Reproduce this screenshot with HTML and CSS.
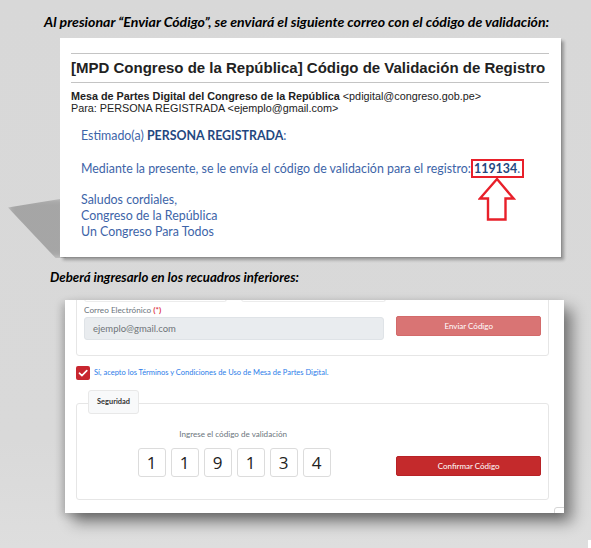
FILE: index.html
```html
<!DOCTYPE html>
<html lang="es">
<head>
<meta charset="utf-8">
<title>Código de validación</title>
<link rel="stylesheet" href="styles.css">
</head>
<body>
<div class="page">
  <p class="caption caption-1">Al presionar “Enviar Código”, se enviará el siguiente correo con el código de validación:</p>

  <div class="email-card">
    <div class="email-head">
      <h1 class="email-title">[MPD Congreso de la República] Código de Validación de Registro</h1>
    </div>
    <div class="email-meta">
      <div><b>Mesa de Partes Digital del Congreso de la República</b> &lt;pdigital@congreso.gob.pe&gt;</div>
      <div>Para: PERSONA REGISTRADA &lt;ejemplo@gmail.com&gt;</div>
    </div>
    <div class="email-body">
      <p class="p-greet">Estimado(a) <b class="dark">PERSONA REGISTRADA</b>:</p>
      <p class="p-main">Mediante la presente, se le envía el código de validación para el registro: <span class="code-box"><b class="dark">119134</b>.</span></p>
      <p class="p-sign">Saludos cordiales,<br>Congreso de la República<br>Un Congreso Para Todos</p>
    </div>
    <svg class="arrow" width="38" height="45" viewBox="0 0 38 45" aria-hidden="true">
      <path d="M19 2 L35.5 21.5 L27.5 21.5 L27.5 42.5 L10 42.5 L10 21.5 L2 21.5 Z" fill="none" stroke="#e8202a" stroke-width="2.4" stroke-linejoin="miter"/>
    </svg>
  </div>

  <p class="caption caption-2">Deberá ingresarlo en los recuadros inferiores:</p>

  <div class="form-card">
    <div class="fieldset fs-contact">
      <div class="prev-row"><span class="prev-a"></span><span class="prev-b"></span></div>
      <div class="field-label">Correo Electrónico <span class="req">(*)</span></div>
      <div class="row">
        <div class="input">ejemplo@gmail.com</div>
        <div class="btn btn-light">Enviar Código</div>
      </div>
    </div>

    <div class="check-row">
      <span class="checkbox">
        <svg width="14" height="14" viewBox="0 0 14 14" aria-hidden="true"><path d="M3.4 7.2 L5.9 9.6 L10.8 4.6" fill="none" stroke="#fff" stroke-width="1.6" stroke-linecap="round" stroke-linejoin="round"/></svg>
      </span>
      <span class="check-text">Sí, acepto los Términos y Condiciones de Uso de Mesa de Partes Digital.</span>
    </div>

    <div class="tab">Seguridad</div>
    <div class="fieldset fs-security">
      <div class="sec-grid">
        <div class="code-col">
          <div class="code-label">Ingrese el código de validación</div>
          <div class="digits">
            <span class="digit">1</span><span class="digit">1</span><span class="digit">9</span><span class="digit">1</span><span class="digit">3</span><span class="digit">4</span>
          </div>
        </div>
        <div class="btn btn-red">Confirmar Código</div>
      </div>
    </div>
    <span class="corner-btn"></span>
  </div>
  <span class="corner-white"></span>
</div>
</body>
</html>
```

FILE: styles.css
```css
* { box-sizing: border-box; }
html, body { margin: 0; padding: 0; }
body {
  width: 591px;
  height: 548px;
  overflow: hidden;
  background: linear-gradient(180deg, #d8d8d8 0%, #d9d9d9 80%, #dedede 100%);
  font-family: "Liberation Sans", Arial, sans-serif;
}
.page {
  position: relative;
  width: 591px;
  height: 548px;
  padding-top: 13px;
}
.caption {
  margin: 0;
  font-family: Lato, "Open Sans", sans-serif;
  font-style: italic;
  font-weight: 700;
  color: #000;
  line-height: 18px;
  white-space: nowrap;
}
.caption-1 { margin-left: 44px; font-size: 14.1px; }
.caption-2 { margin-left: 50px; font-size: 13.2px; margin-top: 11px; }

/* ---------- email ---------- */
.email-card {
  position: relative;
  margin: 7px 0 0 60px;
  width: 501px;
  height: 219px;
  background: #fff;
  padding: 15px 12px 0 11px;
  box-shadow: 3px 3px 3px rgba(0,0,0,0.30), 1px 1px 0 rgba(0,0,0,0.08);
}
.email-card::before {
  content: "";
  position: absolute;
  left: -52px;
  top: 160px;
  width: 58px;
  height: 60px;
  background: rgba(105,105,105,0.45);
  clip-path: polygon(0 16%, 100% 0, 100% 100%, 82% 100%);
  filter: blur(3px);
  z-index: -1;
}
.email-head {
  border-top: 1px solid #c4c4c4;
  border-bottom: 1px solid #c4c4c4;
  width: 478px;
}
.email-title {
  margin: 0;
  font-size: 15px;
  font-weight: 700;
  line-height: 28px;
  color: #222;
  white-space: nowrap;
}
.email-meta {
  margin-top: 7px;
  font-size: 10.8px;
  line-height: 12px;
  color: #222;
  white-space: nowrap;
}
.email-body {
  padding-left: 10px;
  margin-top: 14px;
  font-family: Lato, "Open Sans", sans-serif;
  font-size: 12.4px;
  line-height: 16px;
  color: #3d64a8;
}
.email-body p { margin: 0; white-space: nowrap; }
.email-body .dark { color: #24477f; }
.p-main { margin-top: 15px !important; }
.p-sign { margin-top: 14px !important; }
.code-box {
  display: inline-block;
  border: 2px solid #e8202a;
  padding: 0 2px 0 1px;
  line-height: 15px;
  margin-left: -3px;
}
.arrow {
  position: absolute;
  left: 418px;
  top: 139px;
}

/* ---------- form ---------- */
.form-card {
  position: relative;
  margin: 14px 0 0 65px;
  width: 499px;
  height: 213px;
  background: #fff;
  overflow: hidden;
  padding: 0 15px 0 11px;
  font-family: Lato, "Open Sans", sans-serif;
  box-shadow: 8px 9px 14px rgba(0,0,0,0.45), -3px 3px 8px rgba(0,0,0,0.18);
}
.fieldset {
  border: 1px solid #e6e6e6;
  border-radius: 3px;
}
.fs-contact {
  margin-top: -14px;
  padding: 0 7px 15px 7px;
}
.prev-row {
  display: flex;
  gap: 14px;
  height: 15px;
}
.prev-a, .prev-b {
  border: 1px solid #ececec;
  border-top: none;
  border-radius: 0 0 3px 3px;
  height: 15px;
}
.prev-a { width: 143px; }
.prev-b { width: 145px; }
.field-label {
  margin-top: 3px;
  font-size: 8.2px;
  line-height: 11px;
  color: #6c757d;
}
.req { color: #dc3545; font-weight: 700; }
.row {
  display: flex;
  align-items: flex-start;
  gap: 12px;
  margin-top: 1px;
}
.input {
  width: 301px;
  height: 23px;
  background: #e9ecef;
  border: 1px solid #dfe3e7;
  border-radius: 3px;
  font-size: 9.5px;
  line-height: 21px;
  color: #6f7479;
  padding-left: 8px;
}
.btn {
  width: 145px;
  height: 20px;
  border-radius: 2px;
  color: #fff;
  font-size: 8px;
  line-height: 20px;
  text-align: center;
}
.btn-light {
  margin-top: -1px;
  background: #d97474;
  border: 1px solid #d36a6a;
  line-height: 18px;
}
.check-row {
  display: flex;
  align-items: center;
  gap: 4px;
  margin-top: 9px;
  height: 15px;
}
.checkbox {
  width: 14px;
  height: 14px;
  background: #c8262f;
  border-radius: 2px;
  display: flex;
}
.check-text {
  font-size: 7.5px;
  color: #2b7de9;
}
.tab {
  position: relative;
  z-index: 1;
  margin: 10px 0 -11px 12px;
  width: 51px;
  height: 24px;
  background: #f8f9fa;
  border: 1px solid #e8e8e8;
  border-radius: 3px;
  font-size: 7.4px;
  font-weight: 700;
  color: #333;
  line-height: 22px;
  text-align: center;
}
.fs-security {
  height: 97px;
  padding: 25px 7px 0 7px;
}
.sec-grid {
  display: flex;
  align-items: flex-end;
  gap: 12px;
}
.code-col {
  width: 301px;
  display: flex;
  flex-direction: column;
  align-items: center;
}
.code-label {
  font-size: 8.1px;
  line-height: 11px;
  color: #6c757d;
  margin-left: -2px;
}
.digits {
  display: flex;
  gap: 5px;
  margin-top: 8px;
}
.digit {
  width: 28px;
  height: 29px;
  border: 1px solid #dcdcdc;
  border-radius: 3px;
  font-family: "Open Sans", sans-serif;
  font-size: 17px;
  line-height: 27px;
  text-align: center;
  color: #222;
}
.btn-red {
  background: #c42a2c;
  border: 1px solid #b82226;
  line-height: 18px;
  margin-bottom: 1px;
}
.corner-btn {
  position: absolute;
  left: 489px;
  top: 207px;
  width: 14px;
  height: 14px;
  border: 1px solid #d6d6d6;
  border-radius: 3px;
  background: #fff;
}
.corner-white {
  position: absolute;
  left: 588px;
  top: 540px;
  width: 3px;
  height: 8px;
  background: #fff;
}
```
